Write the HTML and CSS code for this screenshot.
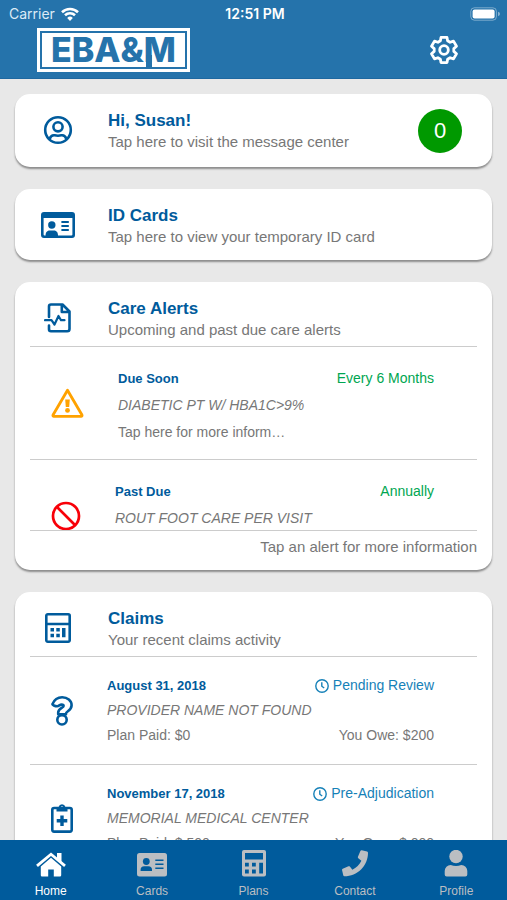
FILE: index.html
```html
<!DOCTYPE html>
<html lang="en">
<head>
<meta charset="utf-8">
<meta name="viewport" content="width=device-width, initial-scale=1">
<title>EBA&amp;M</title>
<link rel="stylesheet" href="styles.css">
</head>
<body>
<header class="top">
  <div class="status">
    <span class="carrier">Carrier
      <svg width="18" height="14" viewBox="0 0 18 14" fill="none" stroke="currentColor" stroke-width="2.6"><path d="M1 5.200a11.500 11.500 0 0 1 16 0M4 8.300a7.200 7.200 0 0 1 10 0"/><path d="M9 14l-2.800-3.100a4 4 0 0 1 5.600 0z" fill="currentColor" stroke="none"/></svg>
    </span>
    <span class="clock">12:51 PM</span>
    <svg class="battery" width="31" height="14" viewBox="0 0 31 14"><rect x=".8" y=".8" width="25.600" height="12.400" rx="3.600" fill="none" stroke="#fff" stroke-opacity=".4"/><rect x="2.600" y="2.600" width="22" height="8.800" rx="2" fill="#fff"/><path d="M28 4.800q2 .6 2 2.200t-2 2.200z" fill="#fff" fill-opacity=".45"/></svg>
  </div>
  <div class="bar">
    <div class="logo"><div class="logo-inner">EBA&amp;<span class="logo-m">M</span></div></div>
    <button class="settings" aria-label="Settings">
      <svg width="30" height="30" viewBox="-15 -15 30 30" fill="none" stroke="currentColor" stroke-width="2.800" stroke-linejoin="round"><path d="M-3.600-9.200L-3-12.600H3L3.600-9.200L6.100-7.700L9.500-8.900L12.500-3.700L9.800-1.400V1.400L12.500 3.700L9.500 8.900L6.100 7.700L3.600 9.200L3 12.600H-3L-3.600 9.200L-6.100 7.700L-9.500 8.900L-12.500 3.700L-9.800 1.400V-1.400L-12.500-3.700L-9.500-8.900L-6.100-7.700Z"/><circle r="4.300"/></svg>
    </button>
  </div>
</header>

<main class="feed">
  <section class="card">
    <div class="head">
      <span class="head-icon"><svg width="30" height="30" viewBox="0 0 30 30" fill="none" stroke="currentColor" stroke-width="2.600"><circle cx="15" cy="15" r="12.800"/><circle cx="15" cy="11.800" r="4.600"/><path d="M6.600 24c1-3 3-4 5-3.700 2.400.6 4.400.6 6.800 0 2-.3 4 .7 5 3.700"/></svg></span>
      <div class="head-text"><h2>Hi, Susan!</h2><p>Tap here to visit the message center</p></div>
      <span class="badge">0</span>
    </div>
  </section>

  <section class="card">
    <div class="head">
      <span class="head-icon"><svg width="34" height="26" viewBox="0 0 34 26"><path fill="currentColor" fill-rule="evenodd" d="M3 0h28a3 3 0 0 1 3 3v20a3 3 0 0 1-3 3H3a3 3 0 0 1-3-3V3a3 3 0 0 1 3-3zM2.600 6v16.400a1 1 0 0 0 1 1H4.600c0-3.600 1.800-5 4.200-5h4c2.400 0 4.200 1.400 4.200 5H30.400a1 1 0 0 0 1-1V6z"/><circle cx="10.800" cy="13" r="3.700" fill="currentColor"/><path stroke="currentColor" stroke-width="1.800" d="M20.400 10h7.400M20.400 14h7.400M20.400 18h7.400"/></svg></span>
      <div class="head-text"><h2>ID Cards</h2><p>Tap here to view your temporary ID card</p></div>
    </div>
  </section>

  <section class="card">
    <div class="head ruled">
      <span class="head-icon"><svg width="28" height="30" viewBox="0 0 28 30" fill="none" stroke="currentColor" stroke-width="2.600" stroke-linejoin="round" stroke-linecap="round"><path d="M5 14V3.500A2 2 0 0 1 7 1.500H18.500L25.500 8.500V26A2.300 2.300 0 0 1 23.200 28.300H7A2 2 0 0 1 5 26.300V22.500M17.800 2V9H25"/><path stroke-width="2.200" d="M1 17.200H7.500L10.500 21.500L14.500 13L17 17.200H20.500"/></svg></span>
      <div class="head-text"><h2>Care Alerts</h2><p>Upcoming and past due care alerts</p></div>
    </div>
    <ul class="alerts">
      <li class="item alert">
        <svg width="33" height="30" viewBox="0 0 33 30"><path d="M16.500 2.200L31 27a1 1 0 0 1-.9 1.400H2.900A1 1 0 0 1 2 27z" fill="none" stroke="#ffa200" stroke-width="2.800" stroke-linejoin="round"/><path d="M14.200 11.500h4.600l-.6 7.500h-3.400z" fill="#ffa200"/><circle cx="16.500" cy="22.400" r="2.400" fill="#ffa200"/></svg>
        <div class="lines">
          <div class="split"><h3>Due Soon</h3><span class="when">Every 6 Months</span></div>
          <p class="name">DIABETIC PT W/ HBA1C&gt;9%</p>
          <p>Tap here for more inform…</p>
        </div>
      </li>
      <li class="item alert">
        <svg width="30" height="30" viewBox="0 0 30 30" fill="none" stroke="#f80008" stroke-width="2.700"><circle cx="15" cy="15" r="13"/><path d="M5.800 5.800l18.400 18.400"/></svg>
        <div class="lines">
          <div class="split"><h3>Past Due</h3><span class="when">Annually</span></div>
          <p class="name">ROUT FOOT CARE PER VISIT</p>
        </div>
      </li>
    </ul>
    <p class="foot">Tap an alert for more information</p>
  </section>

  <section class="card">
    <div class="head ruled">
      <span class="head-icon"><svg width="26" height="30" viewBox="0 0 26 30"><path fill="none" stroke="currentColor" stroke-width="2.600" d="M2.800 1.300H23.200a1.500 1.500 0 0 1 1.500 1.500V27.200a1.500 1.500 0 0 1-1.500 1.500H2.800a1.500 1.500 0 0 1-1.500-1.500V2.800a1.500 1.500 0 0 1 1.500-1.500zM1.300 11H24.700"/><path fill="currentColor" d="M5.500 15h3.500v3.500H5.500zM11.300 15h3.500v3.500h-3.500zM5.500 20.800h3.500v3.500H5.500zM11.300 20.800h3.500v3.500h-3.500zM17 15h3.500v9.300H17z"/></svg></span>
      <div class="head-text"><h2>Claims</h2><p>Your recent claims activity</p></div>
    </div>
    <ul class="claims">
      <li class="item claim">
        <svg width="22" height="30" viewBox="0 0 22 30" fill="none" stroke="currentColor" stroke-width="2.600" stroke-linejoin="round"><path d="M1.400 8.200C3.200 3.800 6.600 1.300 11.200 1.300c5.200 0 9.400 3.300 9.400 8 0 5.300-5.600 6-5.600 8.200v.8H7.200v-1.700c0-4.300 5.400-4.600 5.400-6.600 0-1-.8-1.400-2-1.400-2 0-2.600 1.600-4.400 1.600-2.400 0-4.800-1.300-4.800-2z"/><circle cx="11" cy="23.800" r="4.700"/></svg>
        <div class="lines">
          <div class="split"><h3>August 31, 2018</h3><span class="state"><svg width="14" height="14" viewBox="0 0 14 14" fill="none" stroke="currentColor" stroke-width="1.400"><circle cx="7" cy="7" r="6.200"/><path d="M6.800 3.200v4l2.400 1.800"/></svg>Pending Review</span></div>
          <p class="name">PROVIDER NAME NOT FOUND</p>
          <div class="split"><span>Plan Paid: $0</span><span>You Owe: $200</span></div>
        </div>
      </li>
      <li class="item claim">
        <svg width="22" height="30" viewBox="0 0 22 30"><rect x="1.300" y="5" width="19.400" height="23.600" rx="1.800" fill="none" stroke="currentColor" stroke-width="2.600"/><path fill="currentColor" fill-rule="evenodd" d="M5.500 8.500V5.500a1.500 1.500 0 0 1 1.500-1.500h.6a3.500 3.500 0 0 1 6.800 0h.6a1.500 1.500 0 0 1 1.500 1.500v3zM11 3.200a1.300 1.300 0 1 0 0 2.600 1.300 1.300 0 0 0 0-2.600z"/><path stroke="currentColor" stroke-width="3.400" d="M11 12.500v10.600M5.700 17.800h10.600"/></svg>
        <div class="lines">
          <div class="split"><h3>November 17, 2018</h3><span class="state"><svg width="14" height="14" viewBox="0 0 14 14" fill="none" stroke="currentColor" stroke-width="1.400"><circle cx="7" cy="7" r="6.200"/><path d="M6.800 3.200v4l2.400 1.800"/></svg>Pre-Adjudication</span></div>
          <p class="name">MEMORIAL MEDICAL CENTER</p>
          <div class="split"><span>Plan Paid: $ 500</span><span>You Owe: $ 000</span></div>
        </div>
      </li>
    </ul>
  </section>
</main>

<nav class="tabs">
  <a href="#home" class="tab active"><svg width="30" height="28" viewBox="0 0 30 28"><path fill="currentColor" d="M15 7.800L25.200 16.500V25.300a1.200 1.200 0 0 1-1.200 1.200H17.800V19.500H12.200V26.500H6a1.200 1.200 0 0 1-1.200-1.200V16.500z"/><path fill="none" stroke="currentColor" stroke-width="2.800" d="M1 15.800L15 4.200L29 15.800"/><path fill="currentColor" d="M21 3h4.500v9L21 8.500z"/></svg>Home</a>
  <a href="#cards" class="tab"><svg width="30" height="28" viewBox="0 0 30 28"><rect y="3" width="30" height="23.500" rx="2.500" fill="currentColor"/><g fill="#005b9c"><circle cx="9.300" cy="11.500" r="3.400"/><path d="M3.600 21v-1.200a3.600 3.600 0 0 1 3.600-3.600h4.200a3.600 3.600 0 0 1 3.600 3.600V21z"/><path d="M18.300 9.500h8.200v1.500h-8.200zM18.300 13.500h8.200V15h-8.200zM18.300 17.500h8.200V19h-8.200z"/></g></svg>Cards</a>
  <a href="#plans" class="tab"><svg width="26" height="28" viewBox="0 0 26 28"><rect x="1" width="24" height="26.500" rx="2" fill="currentColor"/><path fill="#005b9c" d="M4 3h18v6.500H4zM4 12.800h3.800v3.800H4zM11 12.800h3.800v3.800H11zM4 19.600h3.800v3.800H4zM11 19.600h3.800v3.800H11zM18.200 12.800H22v10.600h-3.800z"/></svg>Plans</a>
  <a href="#contact" class="tab"><svg width="26" height="28" viewBox="0 0 512 540"><path fill="currentColor" d="M493.400 24.600l-104-24c-11.300-2.600-22.900 3.300-27.500 13.900l-48 112c-4.200 9.800-1.400 21.300 6.900 28l60.600 49.600c-36 76.700-98.900 140.500-177.200 177.200l-49.600-60.600c-6.800-8.300-18.200-11.100-28-6.900l-112 48C3.900 366.500-2 378.100.6 389.400l24 104C27.100 504.200 36.700 512 48 512c256.100 0 464-207.500 464-464 0-11.200-7.700-20.900-18.600-23.400z"/></svg>Contact</a>
  <a href="#profile" class="tab"><svg width="24" height="28" viewBox="0 0 24 28"><circle cx="12" cy="6.500" r="6.700" fill="currentColor"/><path fill="currentColor" d="M.7 24.500V21a6 6 0 0 1 6-6q5.300 2 10.600 0a6 6 0 0 1 6 6v3.500a2 2 0 0 1-2 2H2.700a2 2 0 0 1-2-2z"/></svg>Profile</a>
</nav>
</body>
</html>
```
FILE: styles.css
```css
* { box-sizing: border-box; }

body {
  margin: 0;
  height: 100vh;
  display: flex;
  flex-direction: column;
  overflow: hidden;
  background: #e8e8e8;
  color: #777;
  font-family: "Liberation Sans", Arial, sans-serif;
  font-size: 14px;
}

h2, h3, p, ul { margin: 0; padding: 0; }
ul { list-style: none; }
svg { display: block; flex: none; }

.top {
  flex: none;
  background: #2573ab;
  border-bottom: 1px solid #1e68a0;
  color: #fff;
}

.status {
  display: grid;
  grid-template-columns: 1fr auto 1fr;
  align-items: center;
  height: 28px;
  padding: 0 6px 0 9px;
  font: 14px/20px Inter, sans-serif;
}
.carrier { display: flex; align-items: center; gap: 6px; color: #dcebf6; }
.carrier svg { color: #fff; }
.clock { font-weight: 600; }
.battery { justify-self: end; }

.bar {
  display: flex;
  justify-content: space-between;
  align-items: flex-start;
  padding: 0 48px 6px 37px;
}

.logo { padding: 2px; border: 3px solid #fff; background: #2573ab; }
.logo-inner {
  height: 34px;
  padding: 0 9px;
  background: #fff;
  color: #2573ab;
  font: 800 34px/34px Inter, sans-serif;
}
.logo-m { position: relative; }
.logo-m::after {
  content: "";
  position: absolute;
  left: 2px;
  bottom: 3px;
  width: 6px;
  height: 12px;
  background: #2573ab;
}

.settings {
  margin-top: 7px;
  padding: 0;
  border: 0;
  background: none;
  color: #fff;
}

.feed {
  flex: 1;
  min-height: 0;
  overflow: hidden;
  display: flex;
  flex-direction: column;
  gap: 22px;
  padding: 15px 15px 0;
}

.card {
  flex: none;
  padding: 0 15px;
  border-radius: 15px;
  background: #fff;
  box-shadow: 0 2px 2px rgba(0, 0, 0, .4);
}

.head { display: flex; align-items: flex-start; padding: 15px 0 14px; }
.head.ruled { padding-bottom: 7px; border-bottom: 1px solid #ccc; }
.head-icon {
  display: flex;
  align-items: center;
  justify-content: center;
  width: 56px;
  height: 42px;
  margin-right: 22px;
  color: #005b9c;
}
.head-text { flex: 1; font-size: 15px; line-height: 18px; }
.head-text h2 { font-size: 17px; line-height: 24px; color: #005b9c; }

.badge {
  width: 44px;
  height: 44px;
  margin-right: 15px;
  border-radius: 50%;
  background: #090;
  color: #fff;
  font-size: 22px;
  line-height: 44px;
  text-align: center;
}

.item { display: flex; align-items: center; gap: 34px; padding: 0 43px 0 21px; }
.item + .item { border-top: 1px solid #ccc; }
.lines { flex: 1; align-self: flex-start; padding-top: 16px; }
.alert { height: 112px; line-height: 27px; }
.alert .lines { padding-top: 18px; }
.claim { height: 107px; line-height: 25px; }
.claim > svg { color: #005b9c; }
.split { display: flex; justify-content: space-between; }
h3 { font-size: 13px; color: #005b9c; }
.name { font-style: italic; }
.when { color: #00a651; }
.state { display: flex; align-items: center; gap: 4px; color: #1681b8; }

.alerts { height: 183px; overflow: hidden; }
.foot {
  padding: 6px 0 13px;
  border-top: 1px solid #ccc;
  font-size: 15px;
  line-height: 20px;
  text-align: right;
}

.tabs { flex: none; display: flex; height: 60px; background: #005b9c; }
.tab {
  flex: 1;
  display: flex;
  flex-direction: column;
  align-items: center;
  gap: 4px;
  padding-top: 10px;
  color: #bbbec2;
  font-size: 12px;
  line-height: 18px;
  text-decoration: none;
}
.tab.active { color: #fff; }
```
